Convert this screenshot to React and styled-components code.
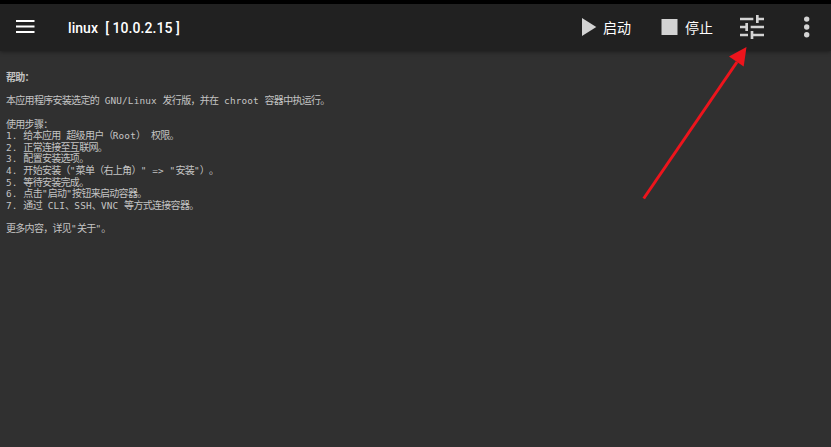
import React from "react";
import styled, { createGlobalStyle } from "styled-components";

const GlobalStyle = createGlobalStyle`
  * { box-sizing: border-box; }
  body { margin: 0; background: #303030; overflow: hidden; }
`;

const Screen = styled.div`
  position: relative;
  display: flex;
  flex-direction: column;
  width: 831px;
  height: 447px;
  background: #303030;
`;

const StatusStrip = styled.div`
  height: 4px;
  background: #000;
`;

const Toolbar = styled.header`
  display: flex;
  align-items: center;
  height: 47px;
  padding: 0 18px 2px 16px;
  background: #212121;
  box-shadow: 0 1px 4px rgba(0, 0, 0, 0.4);
`;

const Icon = styled.svg`
  display: block;
  flex: none;
  width: ${(p) => p.$w}px;
  height: ${(p) => p.$h}px;
  fill: ${(p) => p.$color || "#d3d3d3"};
`;

const Title = styled.h1`
  margin: 2px 0 0 33px;
  font: 500 14px/20px Roboto, sans-serif;
  letter-spacing: 0.06px;
  white-space: pre;
  color: #fff;
`;

const Actions = styled.div`
  display: flex;
  align-items: center;
  margin-left: auto;
`;

const Action = styled.div`
  display: flex;
  align-items: center;
  gap: ${(p) => p.$gap}px;
  margin-right: ${(p) => p.$after}px;
  font: 400 14px/20px "Noto Sans CJK SC", sans-serif;
  color: #fff;
`;

const Help = styled.main`
  padding: 20px 6px;
`;

const Line = styled.p`
  margin: 0;
  height: 11.63px;
  font-family: "Noto Sans CJK SC", sans-serif;
  font-size: 10px;
  letter-spacing: -0.7px;
  text-spacing-trim: space-all;
  line-height: 11.63px;
  font-weight: ${(p) => (p.$bold ? 700 : 400)};
  white-space: pre;
  color: #c4c4c4;
`;

const Latin = styled.span`
  font-family: "DejaVu Sans Mono", monospace;
  font-size: 9.4px;
  letter-spacing: 0.13px;
  line-height: 1;
`;

const Arrow = styled.svg`
  position: absolute;
  left: 630px;
  top: 40px;
  width: 130px;
  height: 165px;
`;

const lines = [
  "帮助：",
  "",
  "本应用程序安装选定的 GNU/Linux 发行版，并在 chroot 容器中执运行。",
  "",
  "使用步骤：",
  "1. 给本应用 超级用户（Root） 权限。",
  "2. 正常连接至互联网。",
  "3. 配置安装选项。",
  "4. 开始安装（\"菜单（右上角）\" => \"安装\"）。",
  "5. 等待安装完成。",
  "6. 点击\"启动\"按钮来启动容器。",
  "7. 通过 CLI、SSH、VNC 等方式连接容器。",
  "",
  "更多内容，详见\"关于\"。",
];

function MixedText({ text }) {
  return text
    .split(/([\x20-\x7e]+)/)
    .map((part, i) => (i % 2 ? <Latin key={i}>{part}</Latin> : part));
}

export default function App() {
  return (
    <Screen>
      <GlobalStyle />
      <StatusStrip />
      <Toolbar>
        <Icon $w={19} $h={16} $color="#fff" viewBox="0 0 19 16">
          <path d="M0 1h18.5v2H0zM0 6.5h18.5v2H0zM0 12h18.5v2H0z" />
        </Icon>
        <Title>{"linux  [ 10.0.2.15 ]"}</Title>
        <Actions>
          <Action $gap={6} $after={30}>
            <Icon $w={15} $h={18} viewBox="0 0 15 18">
              <path d="M0 0v18l14.3-9z" />
            </Icon>
            启动
          </Action>
          <Action $gap={7} $after={27}>
            <Icon $w={17} $h={16} viewBox="0 0 17 16">
              <path d="M0.5 0h16v16h-16z" />
            </Icon>
            停止
          </Action>
          <Icon $w={24} $h={24} viewBox="3 3 18 18">
            <path d="M3 17v2h6v-2H3zM3 5v2h10V5H3zm10 16v-2h8v-2h-8v-2h-2v6h2zM7 9v2H3v2h4v2h2V9H7zm14 4v-2H11v2h10zm-6-4h2V7h4V5h-4V3h-2v6z" />
          </Icon>
          <Icon $w={49} $h={24} viewBox="0 0 49 24">
            <circle cx="42.7" cy="4.1" r="2.7" />
            <circle cx="42.7" cy="12" r="2.7" />
            <circle cx="42.7" cy="19.8" r="2.7" />
          </Icon>
        </Actions>
      </Toolbar>
      <Help>
        {lines.map((text, i) => (
          <Line key={i} $bold={i === 0}>
            <MixedText text={text} />
          </Line>
        ))}
      </Help>
      <Arrow viewBox="0 0 130 165">
        <path d="M13.7 158.5L107 22" stroke="#ed141c" strokeWidth="3" />
        <path d="M116.5 7L99 16.5L113.7 26.5z" fill="#ed141c" />
      </Arrow>
    </Screen>
  );
}
